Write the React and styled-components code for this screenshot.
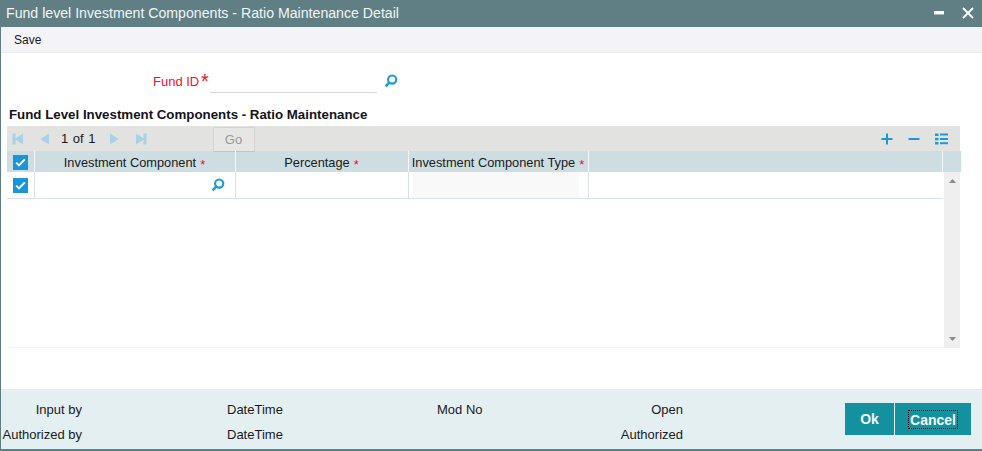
import React from 'react'
import styled, { createGlobalStyle } from 'styled-components'

const Global = createGlobalStyle`
html, body { margin: 0; padding: 0; background: #fff; }
body { font-family: "Liberation Sans", Arial, sans-serif; font-size: 12px; color: #1a1a22; }
`

const Window = styled.div`
width: 982px;
height: 451px;
box-sizing: border-box;
display: flex;
flex-direction: column;
border-left: 1px solid #5f7f84;
border-bottom: 2px solid #5f7f84;
background: #fff;
overflow: hidden;
`

const TitleBar = styled.div`
height: 27px;
flex: none;
margin-left: -1px;
padding: 0 8px 2px 6px;
box-sizing: border-box;
display: flex;
align-items: center;
justify-content: space-between;
background: #5f7f84;
color: #f1f5f5;
font-size: 14.15px;
`

const WinButtons = styled.div`
display: flex;
align-items: center;
gap: 18px;
`

const Toolbar = styled.div`
height: 26px;
flex: none;
padding-left: 13px;
display: flex;
align-items: center;
background: #f3f3f8;
border-bottom: 1px solid #ecedf0;
box-sizing: border-box;
`

const Main = styled.div`
flex: 1;
display: flex;
flex-direction: column;
`

const FieldRow = styled.div`
height: 40px;
margin-top: 8px;
padding-left: 152px;
display: flex;
align-items: center;
`

const FieldLabel = styled.label`
color: #ee1133;
font-size: 13px;
width: 48px;
`

const BigStar = styled.span`
color: #ee1133;
font-size: 20px;
line-height: 10px;
width: 9px;
`

const FieldInput = styled.div`
width: 167px;
height: 23px;
border-bottom: 1px solid #d5d8dd;
margin-right: 7px;
`

const SectionTitle = styled.h2`
margin: 7px 0 0;
padding-left: 8px;
height: 18px;
line-height: 14px;
font-size: 13.3px;
font-weight: 700;
color: #14141c;
`

const Grid = styled.div`
width: 955px;
margin-left: 6px;
`

const GridToolbar = styled.div`
height: 25px;
width: 953px;
background: #e2e2e0;
display: flex;
align-items: center;
padding: 0 12px 0 5px;
box-sizing: border-box;
`

const Pager = styled.div`
display: flex;
align-items: center;
gap: 14px;
`

const PageText = styled.span`
font-size: 13px;
margin: 0 -1px 0 -3px;
word-spacing: 1px;
`

const GoButton = styled.button`
width: 42px;
height: 25px;
margin-left: 66px;
margin-top: 1px;
padding: 0;
border: 1px solid #d4d4d2;
border-bottom-color: #c4c4c2;
background: #e6e6e4;
color: #999;
font: 13px "Liberation Sans", Arial, sans-serif;
`

const GridTools = styled.div`
margin-left: auto;
display: flex;
align-items: center;
gap: 15px;
`

const HeaderRow = styled.div`
display: grid;
grid-template-columns: 28px 201px 173px 180px 354px 19px;
height: 21px;
background: #cddde2;
`

const HeaderCell = styled.div`
display: flex;
align-items: center;
justify-content: center;
padding-top: 1px;
border-right: 1px solid #f5f8f9;
box-sizing: border-box;
font-size: 12.8px;
white-space: nowrap;
`

const Req = styled.span`
color: #e8112d;
font-size: 13px;
line-height: 13px;
margin-top: 4px;
margin-left: 4px;
margin-right: 1px;
`

const Check = styled.span`
width: 15px;
height: 15px;
margin-right: 1px;
margin-top: 1px;
background: #1a95d8;
display: flex;
align-items: center;
justify-content: center;
`

const BodyArea = styled.div`
display: grid;
grid-template-columns: 936px 19px;
height: 176px;
`

const RowsArea = styled.div`
border-bottom: 1px solid #f3f3f6;
`

const DataRow = styled.div`
display: grid;
grid-template-columns: 28px 201px 173px 180px 354px;
height: 27px;
border-bottom: 1px solid #d9e0ea;
box-sizing: border-box;
`

const DataCell = styled.div`
border-right: ${p => (p.$last ? 0 : '1px solid #d9e0ea')};
box-sizing: border-box;
display: flex;
align-items: center;
justify-content: ${p => p.$align || 'center'};
padding-right: ${p => p.$pad || 0}px;
`

const ReadOnly = styled.div`
width: 166px;
height: 100%;
margin: 0 9px 0 4px;
background: #f9f9f9;
`

const Scrollbar = styled.div`
width: 16px;
margin-left: 1px;
background: #efefef;
display: flex;
flex-direction: column;
justify-content: space-between;
align-items: center;
padding: 7px 0;
box-sizing: border-box;
`

const Footer = styled.div`
height: 60px;
flex: none;
background: #e3eff1;
display: flex;
align-items: flex-start;
`

const Audit = styled.div`
display: grid;
grid-template-columns: 81px 355px 100px 146px;
grid-auto-rows: 25px;
padding-top: 8px;
font-size: 13px;
`

const AuditCell = styled.div`
display: flex;
align-items: center;
justify-content: ${p => (p.$right ? 'flex-end' : 'flex-start')};
padding-left: ${p => p.$indent || 0}px;
white-space: nowrap;
`

const Actions = styled.div`
margin-left: auto;
margin-right: 11px;
margin-top: 14px;
display: flex;
gap: 1px;
`

const ActionButton = styled.button`
width: ${p => p.$w}px;
height: 32px;
padding: 0;
border: 0;
background: #14919f;
color: #f4fbfc;
font: 700 14px "Liberation Sans", Arial, sans-serif;
display: flex;
align-items: center;
justify-content: center;
`

const Focused = styled.span`
outline: 1px dotted #000;
padding: 1px 1px 0;
line-height: 16px;
`

const Search = () => (
  <svg width="14" height="14" viewBox="0 0 13 13" fill="none">
    <circle cx="7.6" cy="5.2" r="3.8" stroke="#1a9ad6" strokeWidth="2" />
    <path d="M4.8 8 L1.6 11.4" stroke="#1a9ad6" strokeWidth="2.4" />
  </svg>
)

const Tick = () => (
  <svg width="11" height="9" viewBox="0 0 11 9" fill="none">
    <path d="M1.2 4.6 L4 7.4 L9.8 1.4" stroke="#fff" strokeWidth="2" />
  </svg>
)

const NavIcon = ({ right, bar }) => (
  <svg width="12" height="12" viewBox="0 0 12 12" fill="#a8d2e6" style={{ transform: right ? 'scaleX(-1)' : undefined }}>
    <path d="M11 0.5 V11.5 L2.5 6 Z" />
    {bar && <rect x="0.5" y="0.5" width="3" height="11" />}
  </svg>
)

const Plus = () => (
  <svg width="12" height="12" viewBox="0 0 12 12"><path d="M0.5 6 H11.5 M6 0.5 V11.5" stroke="#1a9ad6" strokeWidth="2" /></svg>
)

const Minus = () => (
  <svg width="12" height="12" viewBox="0 0 12 12"><path d="M0.5 6 H11.5" stroke="#1a9ad6" strokeWidth="2" /></svg>
)

const ListIcon = () => (
  <svg width="13" height="12" viewBox="0 0 13 12" fill="#1a9ad6">
    <rect x="0" y="0.5" width="3.5" height="2.5" />
    <rect x="5" y="0.5" width="8" height="2" />
    <rect x="0" y="4.8" width="3.5" height="2.5" />
    <rect x="5" y="5" width="8" height="2" />
    <rect x="0" y="9" width="3.5" height="2.5" />
    <rect x="5" y="9.2" width="8" height="2" />
  </svg>
)

const Arrow = ({ up }) => (
  <svg width="7" height="4" viewBox="0 0 7 4" fill="#8a8a8a">
    <path d={up ? 'M3.5 0 L7 4 H0 Z' : 'M0 0 H7 L3.5 4 Z'} />
  </svg>
)

export default function App() {
  return (
    <>
      <Global />
      <Window>
        <TitleBar>
          <span>Fund level Investment Components - Ratio Maintenance Detail</span>
          <WinButtons>
            <svg width="10" height="4" viewBox="0 0 10 4"><rect width="10" height="3.4" fill="#fff" /></svg>
            <svg width="12" height="12" viewBox="0 0 12 12"><path d="M1 1 L11 11 M11 1 L1 11" stroke="#fff" strokeWidth="1.8" /></svg>
          </WinButtons>
        </TitleBar>
        <Toolbar>Save</Toolbar>
        <Main>
          <FieldRow>
            <FieldLabel>Fund ID</FieldLabel>
            <BigStar>*</BigStar>
            <FieldInput />
            <Search />
          </FieldRow>
          <SectionTitle>Fund Level Investment Components - Ratio Maintenance</SectionTitle>
          <Grid>
            <GridToolbar>
              <Pager>
                <NavIcon bar />
                <NavIcon />
                <PageText>1 of 1</PageText>
                <NavIcon right />
                <NavIcon right bar />
              </Pager>
              <GoButton>Go</GoButton>
              <GridTools>
                <Plus />
                <Minus />
                <ListIcon />
              </GridTools>
            </GridToolbar>
            <HeaderRow>
              <HeaderCell><Check><Tick /></Check></HeaderCell>
              <HeaderCell>Investment Component<Req>*</Req></HeaderCell>
              <HeaderCell>Percentage<Req>*</Req></HeaderCell>
              <HeaderCell>Investment Component Type<Req>*</Req></HeaderCell>
              <HeaderCell />
              <HeaderCell />
            </HeaderRow>
            <BodyArea>
              <RowsArea>
                <DataRow>
                  <DataCell><Check><Tick /></Check></DataCell>
                  <DataCell $align="flex-end" $pad={10}><Search /></DataCell>
                  <DataCell />
                  <DataCell><ReadOnly /></DataCell>
                  <DataCell $last />
                </DataRow>
              </RowsArea>
              <Scrollbar>
                <Arrow up />
                <Arrow />
              </Scrollbar>
            </BodyArea>
          </Grid>
        </Main>
        <Footer>
          <Audit>
            <AuditCell $right>Input by</AuditCell>
            <AuditCell $indent={145}>DateTime</AuditCell>
            <AuditCell>Mod No</AuditCell>
            <AuditCell $right>Open</AuditCell>
            <AuditCell $right>Authorized by</AuditCell>
            <AuditCell $indent={145}>DateTime</AuditCell>
            <AuditCell />
            <AuditCell $right>Authorized</AuditCell>
          </Audit>
          <Actions>
            <ActionButton $w={49}>Ok</ActionButton>
            <ActionButton $w={76}><Focused>Cancel</Focused></ActionButton>
          </Actions>
        </Footer>
      </Window>
    </>
  )
}
